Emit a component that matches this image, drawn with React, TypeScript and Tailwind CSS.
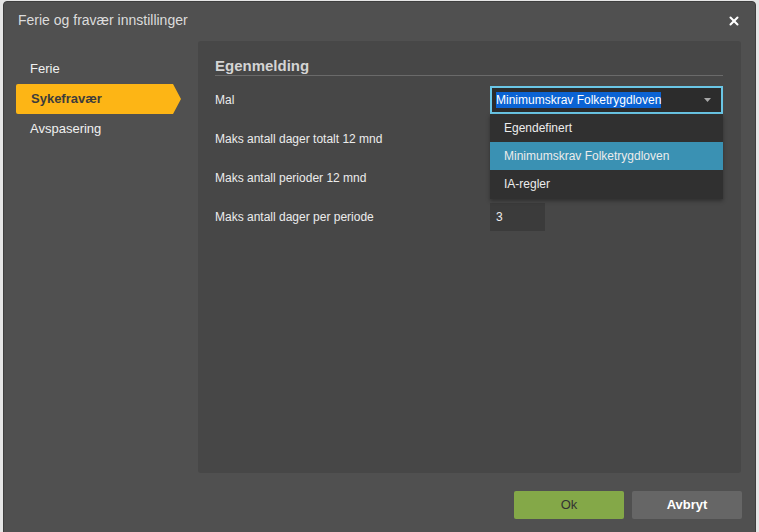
import { X } from "lucide-react"

const navItems = ["Ferie", "Sykefravær", "Avspasering"]
const rows = [
  "Maks antall dager totalt 12 mnd",
  "Maks antall perioder 12 mnd",
  "Maks antall dager per periode",
]
const options = ["Egendefinert", "Minimumskrav Folketrygdloven", "IA-regler"]

export default function App() {
  return (
    <div
      className="flex h-[532px] w-[759px] overflow-hidden bg-[#e6e6e6]"
      style={{ fontFamily: '"Liberation Sans", Arial, sans-serif' }}
    >
      <div className="ml-[3px] mt-[1px] flex h-[540px] w-[753px] flex-col rounded-t-[4px] border border-[#3e3e3e] bg-[#505050]">
        {/* title bar */}
        <div className="flex h-[39px] items-center justify-between pl-[14px] pr-[14px] pb-[2px]">
          <span className="text-[14px] text-[#dcdcdc]">Ferie og fravær innstillinger</span>
          <X className="h-[14px] w-[14px] text-white" strokeWidth={3.5} />
        </div>

        <div className="flex">
          {/* left nav */}
          <div className="w-[194px] shrink-0 pl-[12px] pt-[13px]">
            {navItems.map((item) =>
              item === "Sykefravær" ? (
                <div key={item} className="flex h-[30px] items-center">
                  <div className="flex h-[30px] w-[157px] items-center rounded-l-[2px] bg-[#fdb515] pl-[15px] text-[13px] font-bold text-[#3c3c3c]">
                    {item}
                  </div>
                  <svg width="8" height="30" viewBox="0 0 8 30">
                    <polygon points="0,0 8,15 0,30" fill="#fdb515" />
                  </svg>
                </div>
              ) : (
                <div key={item} className="flex h-[30px] items-center pl-[14px] text-[13px] text-[#f0f0f0]">
                  {item}
                </div>
              )
            )}
          </div>

          {/* content panel */}
          <div className="mr-[15px] h-[432px] flex-1 rounded-[3px] bg-[#474747] pl-[17px] pr-[18px] pt-[17px]">
            <div className="border-b border-[#6a6a6a] pb-[1px] text-[15px] font-bold leading-[16px] text-[#d4d4d4]">
              Egenmelding
            </div>
            <div className="mt-[10px] flex flex-col gap-[11px]">
              <div className="flex h-[28px] items-center">
                <div className="w-[275px] text-[12px] text-[#ececec]">Mal</div>
                <div className="relative">
                  <div className="flex h-[28px] w-[233px] items-center justify-between border-2 border-[#6ac6e6] bg-[#2c2c2c] pl-[4px] pr-[10px]">
                    <span className="bg-[#0b63d3] text-[12px] leading-[16px] text-white">
                      Minimumskrav Folketrygdloven
                    </span>
                    <svg width="7" height="4" viewBox="0 0 7 4">
                      <polygon points="0,0 7,0 3.5,4" fill="#a8a8a8" />
                    </svg>
                  </div>
                  <div className="absolute left-0 top-[28px] z-10 w-[233px] bg-[#303030] pb-[1px] shadow-[0_2px_4px_rgba(0,0,0,0.35)]">
                    {options.map((o) => (
                      <div
                        key={o}
                        className={`flex h-[28px] items-center pl-[14px] text-[12px] text-[#ececec] ${
                          o === "Minimumskrav Folketrygdloven" ? "bg-[#3a91b3]" : ""
                        }`}
                      >
                        {o}
                      </div>
                    ))}
                  </div>
                </div>
              </div>
              {rows.map((r, i) => (
                <div key={r} className="flex h-[28px] items-center">
                  <div className="w-[275px] text-[12px] text-[#ececec]">{r}</div>
                  {i === 2 && (
                    <div className="flex h-[28px] w-[55px] items-center bg-[#3b3b3b] pl-[6px] text-[12px] text-[#ececec]">
                      3
                    </div>
                  )}
                </div>
              ))}
            </div>
          </div>
        </div>

        {/* footer */}
        <div className="mt-[18px] flex justify-end gap-[8px] pr-[13px]">
          <button className="h-[28px] w-[110px] rounded-[2px] bg-[#84a848] text-[13px] text-[#333]">Ok</button>
          <button className="h-[28px] w-[110px] rounded-[2px] bg-[#666666] text-[13px] font-bold text-white">
            Avbryt
          </button>
        </div>
      </div>
    </div>
  )
}
